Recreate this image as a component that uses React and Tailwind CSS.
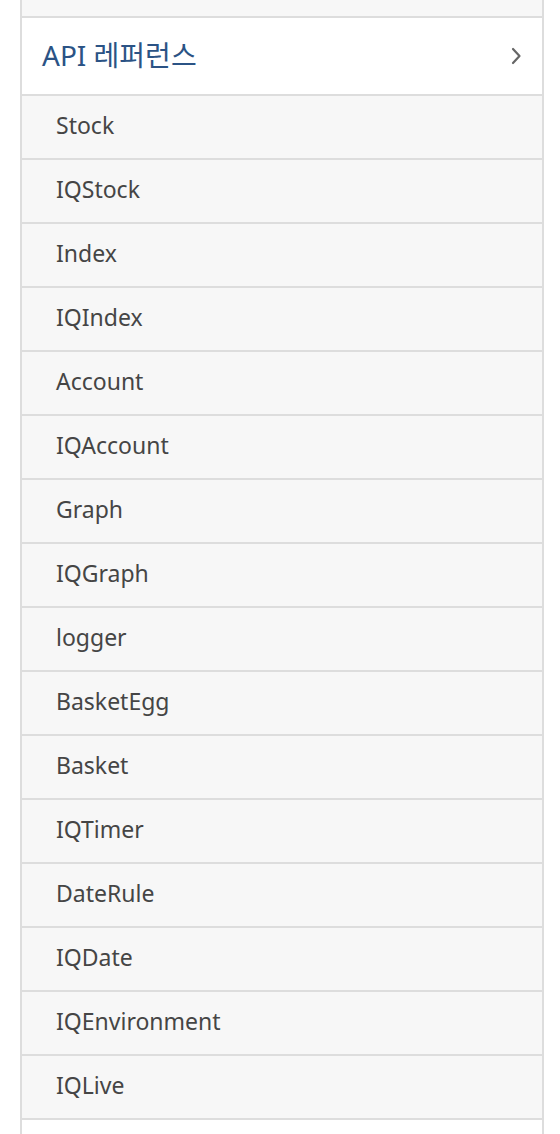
import React from "react";

const items = [
  "Stock",
  "IQStock",
  "Index",
  "IQIndex",
  "Account",
  "IQAccount",
  "Graph",
  "IQGraph",
  "logger",
  "BasketEgg",
  "Basket",
  "IQTimer",
  "DateRule",
  "IQDate",
  "IQEnvironment",
  "IQLive",
];

export default function App() {
  return (
    <div
      className="w-[560px] h-[1134px] bg-white overflow-hidden"
      style={{ fontFamily: '"Noto Sans", "Noto Sans CJK KR", sans-serif' }}
    >
      <div className="ml-[20px] w-[524px] border-x-2 border-[#dddddd] h-[1134px] flex flex-col">
        <div className="h-[18px] shrink-0 bg-[#f7f7f7] border-b-2 border-[#dddddd]" />
        <div className="h-[78px] shrink-0 bg-white border-b-2 border-[#dddddd] flex items-center justify-between pl-[20px] pr-[19px]">
          <span className="text-[28px] text-[#2b5385] leading-none pb-[2px]">
            API 레퍼런스
          </span>
          <svg width="14" height="20" viewBox="0 0 14 20">
            <path
              d="M4 3 L10.5 10 L4 17"
              fill="none"
              stroke="#666666"
              strokeWidth="2.2"
              strokeLinecap="round"
              strokeLinejoin="round"
            />
          </svg>
        </div>
        {items.map((t) => (
          <div
            key={t}
            className="h-[64px] shrink-0 bg-[#f7f7f7] border-b-2 border-[#dddddd] flex items-center pl-[34px]"
          >
            <span className="text-[23px] text-[#454545] leading-none pb-[4px]">{t}</span>
          </div>
        ))}
        <div className="flex-1 bg-white" />
      </div>
    </div>
  );
}
